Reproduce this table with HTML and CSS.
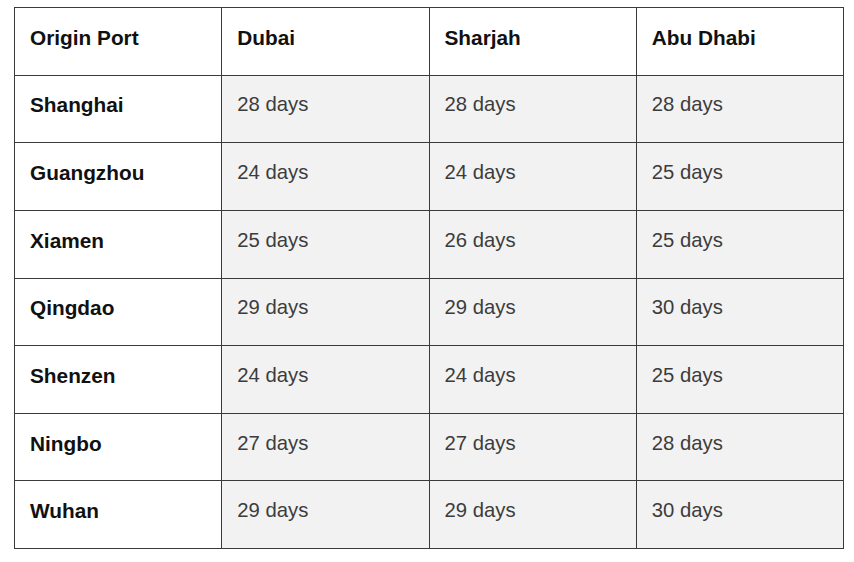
FILE: index.html
```html
<!DOCTYPE html>
<html>
<head>
<meta charset="utf-8">
<link rel="stylesheet" href="styles.css">
</head>
<body>
<table class="ports">
  <thead>
    <tr><th>Origin Port</th><th>Dubai</th><th>Sharjah</th><th>Abu Dhabi</th></tr>
  </thead>
  <tbody>
    <tr><th>Shanghai</th><td>28 days</td><td>28 days</td><td>28 days</td></tr>
    <tr><th>Guangzhou</th><td>24 days</td><td>24 days</td><td>25 days</td></tr>
    <tr><th>Xiamen</th><td>25 days</td><td>26 days</td><td>25 days</td></tr>
    <tr><th>Qingdao</th><td>29 days</td><td>29 days</td><td>30 days</td></tr>
    <tr><th>Shenzen</th><td>24 days</td><td>24 days</td><td>25 days</td></tr>
    <tr><th>Ningbo</th><td>27 days</td><td>27 days</td><td>28 days</td></tr>
    <tr><th>Wuhan</th><td>29 days</td><td>29 days</td><td>30 days</td></tr>
  </tbody>
</table>
</body>
</html>
```
FILE: styles.css
```css
html, body {
  margin: 0;
  padding: 0;
  background: #ffffff;
}
body {
  padding: 7px 0 0 14px;
  font-family: "Liberation Sans", Arial, sans-serif;
}
.ports {
  border-collapse: collapse;
  width: 830px;
  table-layout: fixed;
}
.ports tr {
  height: 67.625px;
}
.ports th, .ports td {
  border: 1px solid #3a3a3a;
  padding: 0 15px 8px 15px;
  text-align: left;
  vertical-align: middle;
  line-height: 23px;
}
.ports th {
  font-weight: bold;
  font-size: 20.8px;
  color: #111111;
  background: #ffffff;
}
.ports td {
  font-weight: normal;
  font-size: 20.3px;
  color: #3c3c3c;
  background: #f2f2f2;
}
```
